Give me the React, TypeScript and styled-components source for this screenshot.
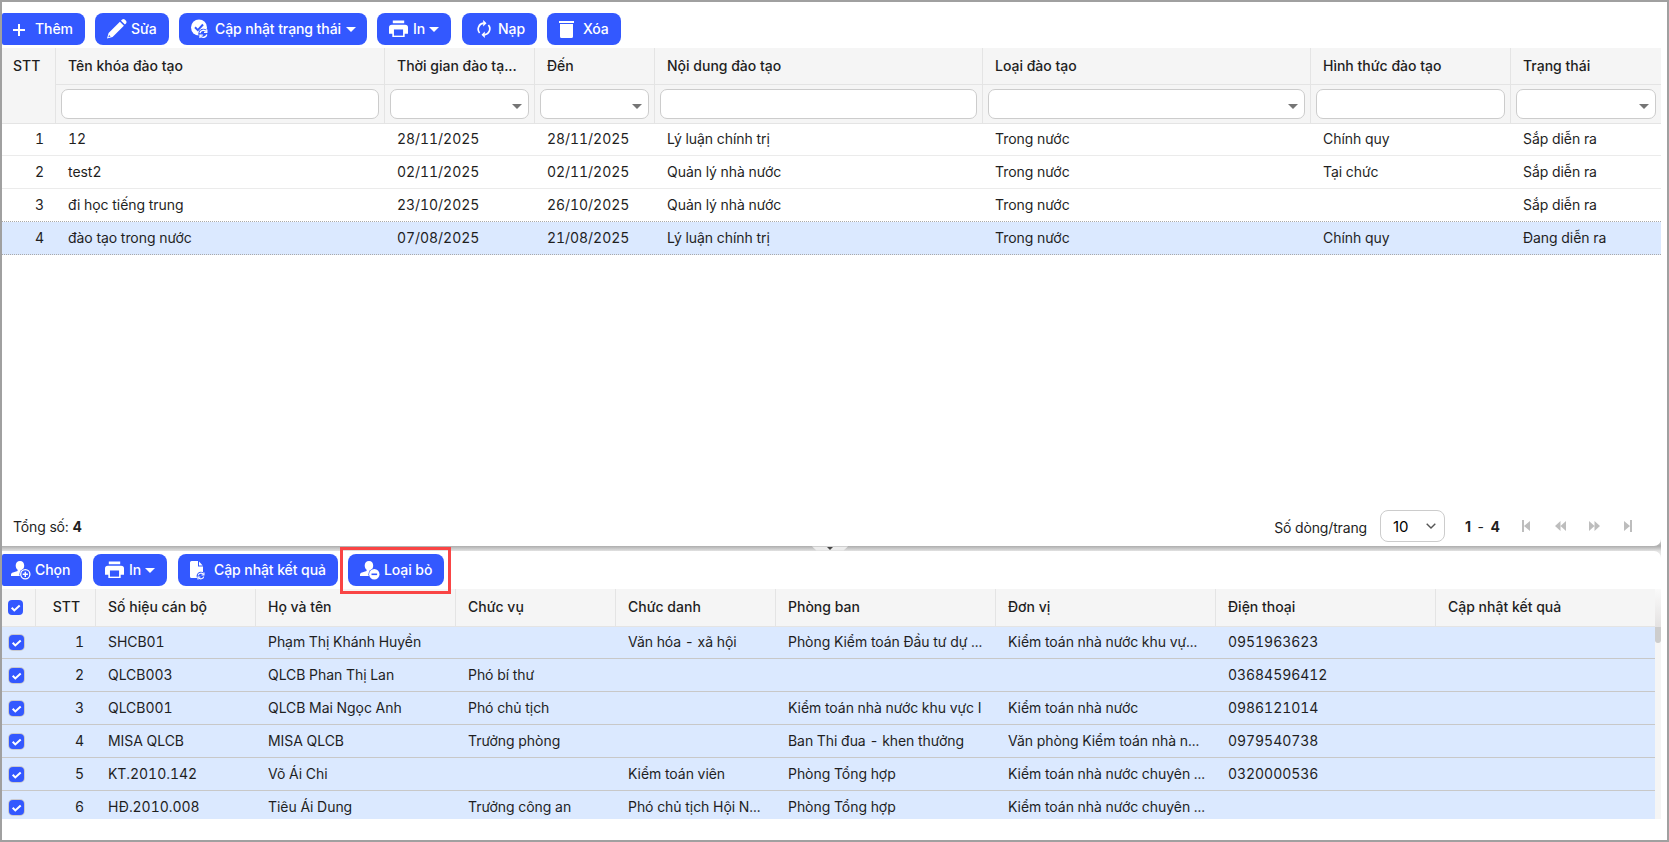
import React from "react";
import styled, { createGlobalStyle, css } from "styled-components";

const GlobalStyle = createGlobalStyle`
  * {
    box-sizing: border-box;
  }
  body {
    margin: 0;
    font-family: Inter, "Liberation Sans", sans-serif;
    font-size: 14px;
    color: #1f1f1f;
    background: #fff;
  }
`;

const Page = styled.div`
  display: flex;
  flex-direction: column;
  width: 1669px;
  height: 842px;
  border: 2px solid #a0a0a0;
  padding-right: 6px;
  overflow: hidden;
`;

const Toolbar = styled.div<{ $top: number; $bottom: number }>`
  display: flex;
  flex: none;
  padding: ${(props) => props.$top}px 0 ${(props) => props.$bottom}px;
`;

const Button = styled.button<{ $width: number; $gap: number; $ml?: number; $pl: number; $flat?: boolean }>`
  display: flex;
  flex: none;
  align-items: center;
  width: ${(props) => props.$width}px;
  height: 32px;
  margin: 0 0 0 ${(props) => props.$ml || 0}px;
  padding: 0 0 2px ${(props) => props.$pl}px;
  gap: ${(props) => props.$gap}px;
  border: 0;
  border-radius: 8px;
  background: #3358ff;
  color: #fff;
  font: 500 14px Inter, "Liberation Sans", sans-serif;
  letter-spacing: -0.08px;
  white-space: nowrap;
  svg {
    flex: none;
    margin-top: 2px;
  }
  ${(props) =>
    props.$flat &&
    css`
      border-top-left-radius: 2px;
      border-bottom-left-radius: 2px;
    `}
`;

const Caret = styled.span<{ $color?: string }>`
  flex: none;
  width: 0;
  height: 0;
  border: 5px solid transparent;
  border-top-color: ${(props) => props.$color || "#fff"};
  border-bottom: 0;
  button > & {
    margin: 2px 0 0 -1px;
  }
`;

const Highlight = styled.div`
  flex: none;
  width: 111px;
  height: 47px;
  margin: -7px 0 -8px 2px;
  padding: 4px 5px;
  border: 3px solid #f94545;
  position: relative;
`;

const HeadRow = styled.div<{ $cols: string; $height: number }>`
  display: grid;
  grid-template-columns: ${(props) => props.$cols};
  flex: none;
  height: ${(props) => props.$height}px;
  background: #f5f5f5;
`;

const HeadCell = styled.div<{ $last?: boolean }>`
  display: flex;
  flex-direction: column;
  min-width: 0;
  border-right: ${(props) => (props.$last ? 0 : 1)}px solid #e4e4e4;
  border-bottom: 1px solid #e4e4e4;
`;

const HeadLabel = styled.div<{ $center?: boolean; $pl?: number }>`
  flex: none;
  height: 36px;
  padding: 0 12px 0 ${(props) => props.$pl ?? 12}px;
  line-height: 36px;
  font-weight: 500;
  white-space: nowrap;
  ${(props) =>
    props.$center &&
    css`
      padding: 0 0 0 2px;
      text-align: center;
    `}
`;

const Filter = styled.div`
  flex: 1;
  padding: 4px 5px 0;
  border-top: 1px solid #e4e4e4;
`;

const FilterBox = styled.div`
  display: flex;
  align-items: center;
  justify-content: flex-end;
  height: 30px;
  padding: 5px 6px 0 0;
  border: 1px solid #ccc;
  border-radius: 7px;
  background: #fff;
`;

const CheckCell = styled.div<{ $pt: number; $pl: number }>`
  padding: ${(props) => props.$pt}px 0 0 ${(props) => props.$pl}px;
  line-height: 0;
`;

const Cell = styled.div<{ $right?: boolean }>`
  min-width: 0;
  padding: 0 ${(props) => (props.$right ? 12 : 4)}px 0 12px;
  line-height: 31px;
  font-variant-numeric: tabular-nums;
  letter-spacing: -0.05px;
  white-space: nowrap;
  overflow: hidden;
  text-align: ${(props) => (props.$right ? "right" : "left")};
`;

const Row = styled.div<{ $cols: string; $state?: "selected" | "checked" | "before" }>`
  display: grid;
  grid-template-columns: ${(props) => props.$cols};
  flex: none;
  height: 33px;
  border-bottom: 1px solid #ebebeb;
  &:first-child {
    height: 32px;
  }
  &:first-child > ${Cell}, &:first-child > ${CheckCell} {
    margin-top: -1px;
  }
  ${(props) =>
    props.$state === "before" &&
    css`
      border-bottom: 1px dotted #a9a9a9;
      background: #fff;
    `}
  ${(props) =>
    props.$state === "selected" &&
    css`
      border-bottom: 1px dotted #a9a9a9;
      background: #dbe9ff;
    `}
  ${(props) =>
    props.$state === "checked" &&
    css`
      border-bottom: 1px solid #c8c8c8;
      background: #dbe9ff;
    `}
`;

const Body = styled.div<{ $height?: number }>`
  display: flex;
  flex-direction: column;
  overflow: hidden;
  ${(props) => (props.$height ? `height: ${props.$height}px;` : "flex: 1;")}
`;

const Footer = styled.div`
  display: flex;
  flex: none;
  align-items: center;
  height: 40px;
  padding: 0 16px 0 11px;
  letter-spacing: -0.15px;
  b {
    font-weight: 700;
  }
`;

const PerPage = styled.span`
  margin-left: auto;
  padding-top: 3px;
`;

const PageSize = styled.div`
  display: flex;
  align-items: center;
  justify-content: space-between;
  width: 65px;
  height: 32px;
  margin: 0 20px 0 13px;
  padding: 0 8px 0 12px;
  border: 1px solid #ccc;
  border-radius: 8px;
  font-size: 15px;
  letter-spacing: 0;
  color: #000;
`;

const Range = styled.span`
  width: 44px;
  letter-spacing: 0;
  word-spacing: 2.5px;
  white-space: nowrap;
`;

const Pager = styled.div`
  display: flex;
`;

const PagerButton = styled.span`
  display: flex;
  justify-content: center;
  width: 34px;
`;

const Splitter = styled.div`
  flex: none;
  display: flex;
  justify-content: center;
  height: 5px;
  padding-right: 4px;
  background: linear-gradient(#adadad, #e2e2e2);
`;

// the splitter shade shows through behind the rounded panel corners
const PanelShade = styled.div<{ $corner: "top" | "bottom" }>`
  flex: none;
  background: linear-gradient(${(props) => (props.$corner === "top" ? "#e2e2e2, #efefef" : "#d8d8d8, #adadad")})
    right ${(props) => props.$corner} / 7px 7px no-repeat;
`;

const Panel = styled.div<{ $height: number; $corner: "top" | "bottom" }>`
  display: flex;
  flex-direction: column;
  height: ${(props) => props.$height}px;
  background: #fff;
  border-${(props) => props.$corner}-right-radius: 7px;
`;

const GridArea = styled.div`
  display: flex;
  height: 230px;
`;

const GridMain = styled.div`
  width: 1653px;
`;

const ScrollTrack = styled.div`
  width: 6px;
  background: #f5f5f5;
`;

const ScrollTop = styled.div`
  height: 38px;
  background: linear-gradient(#fafafa, #e4e2e2);
`;

const ScrollThumb = styled.div`
  height: 16px;
  background: #cdcdcd;
  border-radius: 0 0 3px 3px;
`;

const CheckBox = styled.span<{ $border?: boolean }>`
  display: inline-flex;
  align-items: center;
  justify-content: center;
  width: 15px;
  height: 15px;
  border-radius: 4px;
  background: #3358ff;
  box-shadow: ${(props) => (props.$border ? "0 0 0 1px #c9c9cf" : "none")};
`;

const Check = ({ border }: { border?: boolean }) => (
  <CheckBox $border={border}>
    <svg width='15' height='15' viewBox='0 0 15 15' fill='none'>
      <path d='M3.7 7.8l2.6 2.6 5.4-5' stroke='#fff' strokeWidth='2' />
    </svg>
  </CheckBox>
);

const PlusIcon = () => (
  <svg width='12' height='13' viewBox='0 0 12 13'>
    <path d='M5 1h2v5h5v2H7v5H5V8H0V6h5z' fill='#fff' />
  </svg>
);

const PencilIcon = () => (
  <svg width='20' height='20' viewBox='0 0 20 20' fill='#fff'>
    <path d='M0 19.500l1.600-5.600L12.900 2.700l4 4L5.600 18zM14 1.700l1.100-1.100c.8-.8 1.900-.8 2.700 0l1.200 1.200c.7.8.7 1.800 0 2.600l-1.100 1.200z' />
    <path d='M1.300 18.300l.8-2.400 1.500 1.500z' fill='#3358ff' />
  </svg>
);

const StatusIcon = () => (
  <svg width='18' height='20' viewBox='0 0 18 20'>
    <circle cx='8' cy='8.500' r='8' fill='#fff' />
    <path d='M4 8.300l2.800 2.800 5.200-5.600' fill='none' stroke='#3358ff' strokeWidth='2' />
    <circle cx='12.300' cy='14.800' r='5' fill='#3358ff' />
    <g fill='none' stroke='#fff' strokeWidth='1.300'>
      <path d='M8.900 14.100a3.600 3.600 0 0 1 6.400-1.400M15.800 15.500a3.600 3.600 0 0 1-6.400 1.400' />
      <path d='M15.800 10.600v2.800H13M9 19v-2.800h2.800' />
    </g>
  </svg>
);

const PrintIcon = () => (
  <svg width='19' height='18' viewBox='0 0 20 18' fill='#fff'>
    <path d='M4 0h12v3H4zM3 4.500h14a3 3 0 0 1 3 3V14h-3.500v3.500h-13V14H0V7.500a3 3 0 0 1 3-3z' />
    <path d='M5.200 9.500h9.600v6.500H5.200z' fill='#3358ff' />
  </svg>
);

const ReloadIcon = () => (
  <svg width='14' height='18' viewBox='0 0 14 18'>
    <g fill='none' stroke='#fff' strokeWidth='1.700'>
      <path d='M2.600 13A6 6 0 0 1 6.500 3.200M11.400 5A6 6 0 0 1 7.500 14.800' />
    </g>
    <path d='M6.200 0l3.300 3.200-3.300 3.200zM7.800 11.600v6.400l-3.300-3.200z' fill='#fff' />
  </svg>
);

const TrashIcon = () => (
  <svg width='15' height='18' viewBox='0 0 15 18' fill='#fff'>
    <path d='M0 1h15v2H0zM1 4h13v12.500a1.500 1.500 0 0 1-1.500 1.500h-10A1.500 1.500 0 0 1 1 16.500z' />
  </svg>
);

const UserIcon = ({ minus }: { minus?: boolean }) => (
  <svg width='20' height='20' viewBox='0 0 20 20' fill='#fff'>
    <path d='M9 1c2.700 0 4.200 2 4.200 4.500 0 2-.8 3.600-2 4.700v1.200l3 1.500V16H0v-1.200c0-1.300.8-2 2-2.400l4.600-1.300V9.800c-1.200-1-1.900-2.300-1.900-4.300C4.700 3 6.300 1 9 1z' />
    <circle cx='14.300' cy='14.300' r='5.900' fill='#3358ff' />
    {minus ? (
      <>
        <circle cx='14.300' cy='14.300' r='5.200' />
        <path d='M11.500 13.500h5.600v1.600h-5.600z' fill='#3358ff' />
      </>
    ) : (
      <>
        <circle cx='14.300' cy='14.300' r='4.600' fill='none' stroke='#fff' strokeWidth='1.300' />
        <path d='M13.600 11.700H15v1.900h1.900V15H15v1.900h-1.400V15h-1.900v-1.400h1.900z' />
      </>
    )}
  </svg>
);

const FileIcon = () => (
  <svg width='15' height='19' viewBox='0 0 15 19' fill='#fff'>
    <path d='M1.500 0H8v5.500h5V17H1.500A1.500 1.500 0 0 1 0 15.500v-14A1.500 1.500 0 0 1 1.500 0zM9 .5L12.700 4.500H9z' />
    <circle cx='10.900' cy='15' r='4.300' fill='#3358ff' />
    <g fill='none' stroke='#fff' strokeWidth='1.200'>
      <path d='M8.200 14.400a2.900 2.900 0 0 1 5.200-.9M13.700 15.600a2.900 2.900 0 0 1-5.200.9' />
      <path d='M13.900 11.600v2.400h-2.400M8 18.400V16h2.400' />
    </g>
  </svg>
);

const pagerPaths = [
  { width: 8, d: "M0 0h2v12H0zM8 1v10L2 6z" },
  { width: 11, d: "M5.500 1v10L0 6zM11 1v10L5.500 6z" },
  { width: 11, d: "M0 1v10l5.500-5zM5.500 1v10L11 6z" },
  { width: 8, d: "M6 0h2v12H6zM0 1v10l6-5z" },
];

const courseCols = "54px 329px 150px 120px 328px 328px 200px 150px";
const staffCols = "34px 60px 160px 200px 160px 160px 220px 220px 220px 219px";

const courseHeads = [
  { title: "Tên khóa đào tạo" },
  { title: "Thời gian đào tạ...", select: true },
  { title: "Đến", select: true },
  { title: "Nội dung đào tạo" },
  { title: "Loại đào tạo", select: true },
  { title: "Hình thức đào tạo" },
  { title: "Trạng thái", select: true },
];

const courses = [
  ["1", "12", "28/11/2025", "28/11/2025", "Lý luận chính trị", "Trong nước", "Chính quy", "Sắp diễn ra"],
  ["2", "test2", "02/11/2025", "02/11/2025", "Quản lý nhà nước", "Trong nước", "Tại chức", "Sắp diễn ra"],
  ["3", "đi học tiếng trung", "23/10/2025", "26/10/2025", "Quản lý nhà nước", "Trong nước", "", "Sắp diễn ra"],
  ["4", "đào tạo trong nước", "07/08/2025", "21/08/2025", "Lý luận chính trị", "Trong nước", "Chính quy", "Đang diễn ra"],
];

const staffHeads = [
  "Số hiệu cán bộ",
  "Họ và tên",
  "Chức vụ",
  "Chức danh",
  "Phòng ban",
  "Đơn vị",
  "Điện thoại",
  "Cập nhật kết quả",
];

const staff = [
  ["1", "SHCB01", "Phạm Thị Khánh Huyền", "", "Văn hóa - xã hội", "Phòng Kiểm toán Đầu tư dự ...", "Kiểm toán nhà nước khu vự...", "0951963623", ""],
  ["2", "QLCB003", "QLCB Phan Thị Lan", "Phó bí thư", "", "", "", "03684596412", ""],
  ["3", "QLCB001", "QLCB Mai Ngọc Anh", "Phó chủ tịch", "", "Kiểm toán nhà nước khu vực I", "Kiểm toán nhà nước", "0986121014", ""],
  ["4", "MISA QLCB", "MISA QLCB", "Trưởng phòng", "", "Ban Thi đua - khen thưởng", "Văn phòng Kiểm toán nhà n...", "0979540738", ""],
  ["5", "KT.2010.142", "Võ Ái Chi", "", "Kiểm toán viên", "Phòng Tổng hợp", "Kiểm toán nhà nước chuyên ...", "0320000536", ""],
  ["6", "HĐ.2010.008", "Tiêu Ái Dung", "Trưởng công an", "Phó chủ tịch Hội N...", "Phòng Tổng hợp", "Kiểm toán nhà nước chuyên ...", "", ""],
];

const App = () => {
  return (
    <>
      <GlobalStyle />
      <Page>
        <PanelShade $corner='bottom'>
          <Panel $height={544} $corner='bottom'>
            <Toolbar $top={11} $bottom={3}>
              <Button $width={83} $pl={11} $gap={10} $flat>
                <PlusIcon />
                Thêm
              </Button>
              <Button $width={74} $ml={10} $pl={12} $gap={4}>
                <PencilIcon />
                Sửa
              </Button>
              <Button $width={188} $ml={10} $pl={12} $gap={6}>
                <StatusIcon />
                Cập nhật trạng thái
                <Caret />
              </Button>
              <Button $width={74} $ml={10} $pl={12} $gap={5}>
                <PrintIcon />
                In
                <Caret />
              </Button>
              <Button $width={75} $ml={11} $pl={15} $gap={7}>
                <ReloadIcon />
                Nạp
              </Button>
              <Button $width={74} $ml={10} $pl={12} $gap={9}>
                <TrashIcon />
                Xóa
              </Button>
            </Toolbar>
            <HeadRow $cols={courseCols} $height={76}>
              <HeadCell>
                <HeadLabel $pl={11}>STT</HeadLabel>
              </HeadCell>
              {courseHeads.map((head, index) => (
                <HeadCell key={index} $last={index === courseHeads.length - 1}>
                  <HeadLabel>{head.title}</HeadLabel>
                  <Filter>
                    <FilterBox>{head.select ? <Caret $color='#757575' /> : ""}</FilterBox>
                  </Filter>
                </HeadCell>
              ))}
            </HeadRow>
            <Body>
              {courses.map((course, index) => (
                <Row
                  key={index}
                  $cols={courseCols}
                  $state={index === 3 ? "selected" : index === 2 ? "before" : undefined}
                >
                  {course.map((text, i) => (
                    <Cell key={i} $right={i === 0}>
                      {text}
                    </Cell>
                  ))}
                </Row>
              ))}
            </Body>
            <Footer>
              <span>
                Tổng số: <b>4</b>
              </span>
              <PerPage>Số dòng/trang</PerPage>
              <PageSize>
                10
                <svg width='10' height='6' viewBox='0 0 10 6' fill='none'>
                  <path d='M.7.7L5 5 9.300.7' stroke='#555' strokeWidth='1.400' />
                </svg>
              </PageSize>
              <Range>
                <b>1</b> - <b>4</b>
              </Range>
              <Pager>
                {pagerPaths.map((icon, index) => (
                  <PagerButton key={index}>
                    <svg width={icon.width} height='12' fill='#bdbdbd'>
                      <path d={icon.d} />
                    </svg>
                  </PagerButton>
                ))}
              </Pager>
            </Footer>
          </Panel>
        </PanelShade>
        <Splitter>
          <svg width='36' height='5' viewBox='0 0 36 5'>
            <path d='M0 .5h36L31.500 4.500h-27z' fill='#ececec' />
            <path d='M15.500 1h5v1h-1v1h-1v1h-1V3h-1V2h-1z' fill='#444' />
          </svg>
        </Splitter>
        <PanelShade $corner='top'>
          <Panel $height={289} $corner='top'>
            <Toolbar $top={3} $bottom={3}>
              <Button $width={80} $pl={9} $gap={4} $flat>
                <UserIcon />
                Chọn
              </Button>
              <Button $width={74} $ml={11} $pl={12} $gap={5}>
                <PrintIcon />
                In
                <Caret />
              </Button>
              <Button $width={160} $ml={11} $pl={12} $gap={9}>
                <FileIcon />
                Cập nhật kết quả
              </Button>
              <Highlight>
                <Button $width={96} $pl={12} $gap={4}>
                  <UserIcon minus />
                  Loại bỏ
                </Button>
              </Highlight>
            </Toolbar>
            <GridArea>
              <GridMain>
                <HeadRow $cols={staffCols} $height={38}>
                  <HeadCell>
                    <CheckCell $pt={11} $pl={6}>
                      <Check />
                    </CheckCell>
                  </HeadCell>
                  <HeadCell>
                    <HeadLabel $center>STT</HeadLabel>
                  </HeadCell>
                  {staffHeads.map((title, index) => (
                    <HeadCell key={index} $last={index === staffHeads.length - 1}>
                      <HeadLabel>{title}</HeadLabel>
                    </HeadCell>
                  ))}
                </HeadRow>
                <Body $height={192}>
                  {staff.map((person, index) => (
                    <Row key={index} $cols={staffCols} $state='checked'>
                      <CheckCell $pt={9} $pl={7}>
                        <Check border />
                      </CheckCell>
                      {person.map((text, i) => (
                        <Cell key={i} $right={i === 0}>
                          {text}
                        </Cell>
                      ))}
                    </Row>
                  ))}
                </Body>
              </GridMain>
              <ScrollTrack>
                <ScrollTop />
                <ScrollThumb />
              </ScrollTrack>
            </GridArea>
          </Panel>
        </PanelShade>
      </Page>
    </>
  );
};

export default App;
